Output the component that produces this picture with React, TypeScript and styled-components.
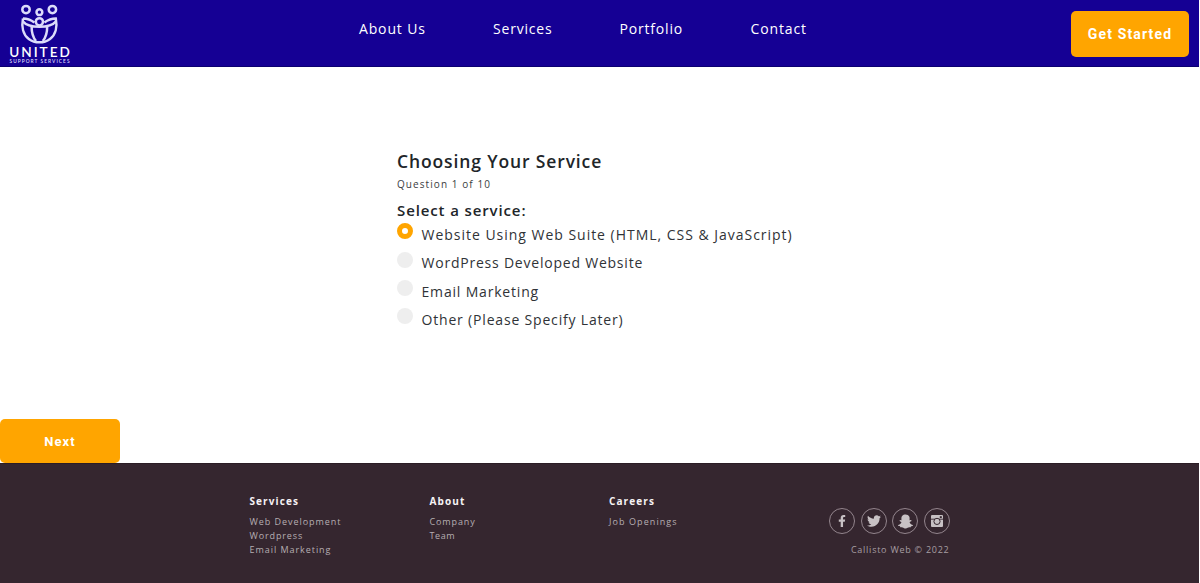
import React, { useState } from "react";
import styled, { createGlobalStyle } from "styled-components";
import { FaFacebookF, FaTwitter, FaSnapchatGhost } from "react-icons/fa";

const GlobalStyle = createGlobalStyle`
  * { box-sizing: border-box; }
  body { margin: 0; background: #fff; font-family: "Open Sans", "Noto Sans", sans-serif; color: #212529; }
  h1, h2, h3, p, ul { margin: 0; padding: 0; }
  ul { list-style: none; }
`;

const Page = styled.div`
  width: 1199px;
  height: 583px;
  display: flex;
  flex-direction: column;
  overflow: hidden;
`;

const Header = styled.header`
  height: 67px;
  flex: none;
  display: flex;
  align-items: flex-start;
  background: #150094;
  border-bottom: 1px solid #0b0070;
`;

const LogoBox = styled.div`
  width: 359px;
  padding: 4px 0 0 9px;
  svg { display: block; }
`;

const Nav = styled.nav`
  flex: 1;
  display: flex;
  padding-top: 18px;
`;

const NavLink = styled.a<{ $width: number; $spacing: number }>`
  width: ${(p) => p.$width}px;
  font-size: 14px;
  line-height: 22px;
  letter-spacing: ${(p) => p.$spacing}px;
  color: #fff;
  white-space: nowrap;
`;

const Button = styled.button<{ $width: number; $height: number; $size: number; $spacing: number }>`
  width: ${(p) => p.$width}px;
  height: ${(p) => p.$height}px;
  flex: none;
  border: 0;
  padding: 0;
  border-radius: 5px;
  background: #ffa500;
  color: #fff;
  font: 700 ${(p) => p.$size}px Roboto, sans-serif;
  letter-spacing: ${(p) => p.$spacing}px;
`;

const HeaderAction = styled.div`
  padding: 11px 10px 0 0;
`;

const Main = styled.main`
  height: 352px;
  padding: 81px 0 0 397px;
`;

const Title = styled.h1`
  font-size: 17.5px;
  font-weight: 600;
  line-height: 26px;
  letter-spacing: 0.87px;
`;

const Progress = styled.p`
  font-size: 10px;
  line-height: 14px;
  margin-top: 3px;
  letter-spacing: 1.07px;
  color: #3a3d41;
`;

const Question = styled.h2`
  margin: 8px 0 0.6px;
  font-size: 15px;
  font-weight: 600;
  line-height: 22px;
  letter-spacing: 0.88px;
`;

const Option = styled.label<{ $spacing: number }>`
  display: flex;
  height: 28.4px;
  font-size: 14px;
  line-height: 22px;
  letter-spacing: ${(p) => p.$spacing}px;
  color: #303337;
  white-space: nowrap;
`;

const OptionText = styled.span`
  padding-top: 2.2px;
`;

const Radio = styled.input`
  appearance: none;
  width: 16px;
  height: 16px;
  flex: none;
  margin: 1.7px 8.5px 0 0;
  border-radius: 50%;
  background: #eee;
  &:checked {
    background: #fff;
    border: 5.5px solid #ffa500;
  }
`;

const Footer = styled.footer`
  height: 120px;
  flex: none;
  display: flex;
  padding: 30px 0 0 249.5px;
  background: #35262f;
  border-top: 1px solid #2b1d25;
`;

const Column = styled.section<{ $width: number }>`
  width: ${(p) => p.$width}px;
`;

const ColumnTitle = styled.h3`
  font-size: 10px;
  line-height: 14px;
  font-weight: 700;
  letter-spacing: 1.1px;
  color: #f6f2f4;
  margin-bottom: 7px;
`;

const ColumnItem = styled.li<{ $spacing: number }>`
  font-size: 9px;
  line-height: 14.2px;
  letter-spacing: ${(p) => p.$spacing}px;
  color: #b6aeb2;
`;

const Social = styled.div`
  width: 161px;
  padding-top: 14px;
`;

const SocialRow = styled.div`
  display: flex;
  justify-content: flex-end;
  gap: 5.5px;
`;

const SocialLink = styled.a`
  width: 26px;
  height: 26px;
  display: flex;
  align-items: center;
  justify-content: center;
  border: 1px solid #93858d;
  border-radius: 50%;
  color: #c7c1c4;
`;

const Copyright = styled.p`
  margin: 9px 0 0;
  text-align: right;
  font-size: 9px;
  line-height: 14px;
  letter-spacing: 0.75px;
  color: #a79ea3;
`;

const Logo = () => (
  <svg width="62" height="60" viewBox="0 0 62 60" fill="none" stroke="#dcdcfa" strokeWidth="2.5">
    <circle cx="17" cy="5.6" r="3.7" />
    <circle cx="30.4" cy="8.2" r="2.9" />
    <circle cx="43.4" cy="5.600" r="3.700" />
    <circle cx="30.400" cy="17.800" r="3.600" />
    <path d="M14 14.500c-1.600 8 0 16.200 5.800 20.400 6 4.600 15.200 4.600 21.200 0 5.800-4.200 7.400-12.400 5.800-20.400-4.600 0-8 1.500-11.400 4M14 14.500c4.600 0 8 1.500 11.400 4" />
    <path d="M14 17.500c3 3.800 9 5.300 16.400 5.300s13.400-1.500 16.400-5.300M22.600 22.500c0 6.500 1.400 11 4.400 14.500M38.200 22.500c0 6.500-1.400 11-4.400 14.500" />
    <text x="0.300" y="52.500" fill="#fff" stroke="none" fontFamily="Lato, sans-serif" fontSize="13.600" fontWeight="600" textLength="60.500" lengthAdjust="spacing">UNITED</text>
    <text x="0.500" y="58.600" fill="#dcdcfa" stroke="none" fontFamily="Lato, sans-serif" fontSize="4.800" fontWeight="600" textLength="60" lengthAdjust="spacing">SUPPORT SERVICES</text>
  </svg>
);

const Camera = () => (
  <svg width="12" height="12" viewBox="0 0 12 12">
    <rect width="12" height="12" rx="1" fill="currentColor" />
    <path d="M0 4.200h12" stroke="#35262f" strokeWidth="0.900" />
    <rect x="8.800" y="1.200" width="2" height="1.800" fill="#35262f" />
    <circle cx="6" cy="6.400" r="3.100" fill="currentColor" stroke="#35262f" strokeWidth="1" />
  </svg>
);

const navLinks = [
  { label: "About Us", width: 134, spacing: 0.85 },
  { label: "Services", width: 126.5, spacing: 0.8 },
  { label: "Portfolio", width: 131, spacing: 0.82 },
  { label: "Contact", width: 60, spacing: 0.87 },
];

const options = [
  { label: "Website Using Web Suite (HTML, CSS & JavaScript)", spacing: 0.98 },
  { label: "WordPress Developed Website", spacing: 0.78 },
  { label: "Email Marketing", spacing: 0.82 },
  { label: "Other (Please Specify Later)", spacing: 0.82 },
];

const columns = [
  {
    title: "Services",
    width: 180,
    items: [
      { label: "Web Development", spacing: 0.95 },
      { label: "Wordpress", spacing: 0.87 },
      { label: "Email Marketing", spacing: 0.95 },
    ],
  },
  {
    title: "About",
    width: 179.5,
    items: [
      { label: "Company", spacing: 0.88 },
      { label: "Team", spacing: 0.6 },
    ],
  },
  { title: "Careers", width: 179.5, items: [{ label: "Job Openings", spacing: 1.08 }] },
];

export default function App() {
  const [selected, setSelected] = useState(0);
  return (
    <Page>
      <GlobalStyle />
      <Header>
        <LogoBox><Logo /></LogoBox>
        <Nav>
          {navLinks.map((l) => (
            <NavLink key={l.label} $width={l.width} $spacing={l.spacing}>{l.label}</NavLink>
          ))}
        </Nav>
        <HeaderAction>
          <Button $width={118} $height={46} $size={14} $spacing={1.15}>Get Started</Button>
        </HeaderAction>
      </Header>
      <Main>
        <Title>Choosing Your Service</Title>
        <Progress>Question 1 of 10</Progress>
        <Question>Select a service:</Question>
        {options.map((o, i) => (
          <Option key={o.label} $spacing={o.spacing}>
            <Radio type="radio" name="service" checked={selected === i} onChange={() => setSelected(i)} />
            <OptionText>{o.label}</OptionText>
          </Option>
        ))}
      </Main>
      <Button $width={120} $height={44} $size={13} $spacing={1.1}>Next</Button>
      <Footer>
        {columns.map((c) => (
          <Column key={c.title} $width={c.width}>
            <ColumnTitle>{c.title}</ColumnTitle>
            <ul>
              {c.items.map((item) => (
                <ColumnItem key={item.label} $spacing={item.spacing}>{item.label}</ColumnItem>
              ))}
            </ul>
          </Column>
        ))}
        <Social>
          <SocialRow>
            <SocialLink><FaFacebookF size={12} /></SocialLink>
            <SocialLink><FaTwitter size={14} /></SocialLink>
            <SocialLink><FaSnapchatGhost size={15} /></SocialLink>
            <SocialLink><Camera /></SocialLink>
          </SocialRow>
          <Copyright>Callisto Web © 2022</Copyright>
        </Social>
      </Footer>
    </Page>
  );
}
